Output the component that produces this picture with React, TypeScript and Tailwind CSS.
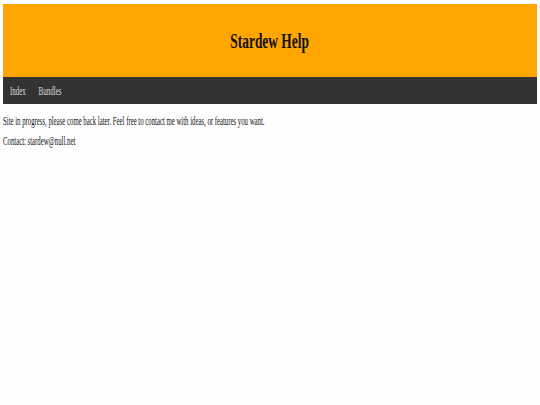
export default function App() {
  return (
    <div className="min-h-[405px] bg-[#fefefe] px-[3px] pt-[4px] font-['Liberation_Serif',serif] text-black">
      <header className="flex h-[73px] items-center justify-center bg-[#ffa500]">
        <h1 className="origin-center scale-x-[0.67] text-[20px] font-bold text-[#111]">Stardew Help</h1>
      </header>
      <nav className="flex h-[27px] items-center bg-[#333333] px-[7px] text-[12px] text-[#dddddd]">
        <div className="flex origin-left scale-x-[0.58] gap-[22px] whitespace-nowrap">
          <a>Index</a>
          <a>Bundles</a>
        </div>
      </nav>
      <main className="pt-[9px] text-[13px] leading-[15px] text-[#111]">
        <p className="origin-left scale-x-[0.52] whitespace-nowrap">
          Site in progress, please come back later. Feel free to contact me with ideas, or features you want.
        </p>
        <p className="mt-[5px] origin-left scale-x-[0.52] whitespace-nowrap">Contact: stardew@null.net</p>
      </main>
    </div>
  );
}
